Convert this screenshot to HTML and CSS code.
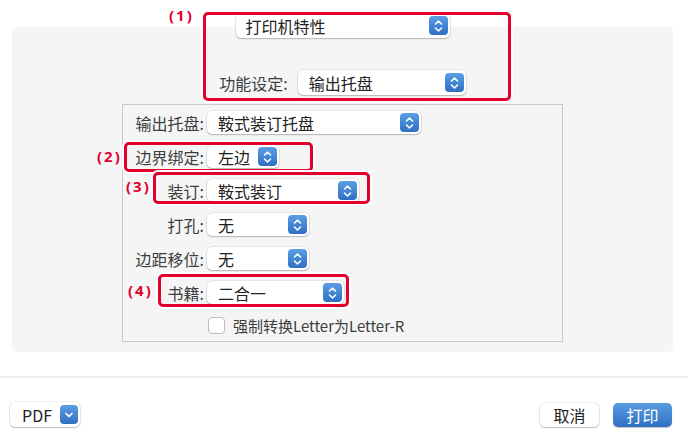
FILE: index.html
```html
<!DOCTYPE html>
<html lang="zh-CN">
<head>
    <meta charset="UTF-8">
    <meta name="viewport" content="width=device-width, initial-scale=1.0">
    <title>打印</title>
    <link rel="stylesheet" href="styles.css">
</head>
<body>
    <div class="window">
        <div class="panel">
            <div class="popup popup-top">
                <span>打印机特性</span>
                <span class="stepper"><svg viewBox="0 0 19 20" width="19" height="20"><path d="M6.5 8 L9.5 5 L12.5 8 M6.5 12 L9.5 15 L12.5 12" fill="none" stroke="#fff" stroke-width="1.6" stroke-linecap="round" stroke-linejoin="round"/></svg></span>
            </div>

            <div class="feature-row">
                <span class="label">功能设定:</span>
                <div class="popup popup-feature">
                    <span>输出托盘</span>
                    <span class="stepper"><svg viewBox="0 0 19 20" width="19" height="20"><path d="M6.5 8 L9.5 5 L12.5 8 M6.5 12 L9.5 15 L12.5 12" fill="none" stroke="#fff" stroke-width="1.6" stroke-linecap="round" stroke-linejoin="round"/></svg></span>
                </div>
            </div>

            <div class="options">
                <span class="label">输出托盘:</span>
                <div class="popup w-214">
                    <span>鞍式装订托盘</span>
                    <span class="stepper"><svg viewBox="0 0 19 20" width="19" height="20"><path d="M6.5 8 L9.5 5 L12.5 8 M6.5 12 L9.5 15 L12.5 12" fill="none" stroke="#fff" stroke-width="1.6" stroke-linecap="round" stroke-linejoin="round"/></svg></span>
                </div>

                <span class="label">边界绑定:</span>
                <div class="popup w-72">
                    <span>左边</span>
                    <span class="stepper"><svg viewBox="0 0 19 20" width="19" height="20"><path d="M6.5 8 L9.5 5 L12.5 8 M6.5 12 L9.5 15 L12.5 12" fill="none" stroke="#fff" stroke-width="1.6" stroke-linecap="round" stroke-linejoin="round"/></svg></span>
                </div>

                <span class="label">装订:</span>
                <div class="popup w-152">
                    <span>鞍式装订</span>
                    <span class="stepper"><svg viewBox="0 0 19 20" width="19" height="20"><path d="M6.5 8 L9.5 5 L12.5 8 M6.5 12 L9.5 15 L12.5 12" fill="none" stroke="#fff" stroke-width="1.6" stroke-linecap="round" stroke-linejoin="round"/></svg></span>
                </div>

                <span class="label">打孔:</span>
                <div class="popup w-102">
                    <span>无</span>
                    <span class="stepper"><svg viewBox="0 0 19 20" width="19" height="20"><path d="M6.5 8 L9.5 5 L12.5 8 M6.5 12 L9.5 15 L12.5 12" fill="none" stroke="#fff" stroke-width="1.6" stroke-linecap="round" stroke-linejoin="round"/></svg></span>
                </div>

                <span class="label">边距移位:</span>
                <div class="popup w-102">
                    <span>无</span>
                    <span class="stepper"><svg viewBox="0 0 19 20" width="19" height="20"><path d="M6.5 8 L9.5 5 L12.5 8 M6.5 12 L9.5 15 L12.5 12" fill="none" stroke="#fff" stroke-width="1.6" stroke-linecap="round" stroke-linejoin="round"/></svg></span>
                </div>

                <span class="label">书籍:</span>
                <div class="popup w-137">
                    <span>二合一</span>
                    <span class="stepper"><svg viewBox="0 0 19 20" width="19" height="20"><path d="M6.5 8 L9.5 5 L12.5 8 M6.5 12 L9.5 15 L12.5 12" fill="none" stroke="#fff" stroke-width="1.6" stroke-linecap="round" stroke-linejoin="round"/></svg></span>
                </div>

                <label class="check-row">
                    <span class="checkbox"></span>
                    <span>强制转换Letter为Letter-R</span>
                </label>
            </div>
        </div>

        <div class="divider"></div>

        <div class="footer">
            <button class="pdf-button">
                <span>PDF</span>
                <span class="pdf-arrow"><svg viewBox="0 0 18 18" width="18" height="18"><path d="M6 7.5 L9 10.5 L12 7.5" fill="none" stroke="#fff" stroke-width="1.7" stroke-linecap="round" stroke-linejoin="round"/></svg></span>
            </button>
            <div class="actions">
                <button class="btn">取消</button>
                <button class="btn btn-primary">打印</button>
            </div>
        </div>

        <!-- callout markers -->
        <div class="callout box-1"></div>
        <div class="callout box-2"></div>
        <div class="callout box-3"></div>
        <div class="callout box-4"></div>
        <span class="marker marker-1">(1)</span>
        <span class="marker marker-2">(2)</span>
        <span class="marker marker-3">(3)</span>
        <span class="marker marker-4">(4)</span>
    </div>
</body>
</html>
```

FILE: styles.css
```css
:root {
    --panel: #f5f5f5;
    --border: #c9c9c9;
    --text: #222222;
    --label: #3d3d3d;
    --blue-top: #5c9ee4;
    --blue-bottom: #2e6fc4;
    --red: #e2002c;
}
body {
    margin: 0;
    background: #ffffff;
    font-family: "Noto Sans CJK SC", "Noto Sans", sans-serif;
    font-size: 16px;
    color: var(--text);
}
.window {
    position: relative;
    width: 688px;
    height: 445px;
    overflow: hidden;
}
.panel {
    margin: 27px 15px 0 12px;
    height: 325px;
    background: var(--panel);
    border-radius: 5px;
    display: flex;
    flex-direction: column;
    align-items: center;
}

/* popup buttons */
.popup {
    box-sizing: border-box;
    height: 23px;
    padding: 0 2px 0 11px;
    background: #ffffff;
    border-radius: 5px;
    box-shadow: 0 0 0 0.5px rgba(0, 0, 0, 0.12), 0 1px 1.5px rgba(0, 0, 0, 0.22);
    display: flex;
    align-items: center;
    justify-content: space-between;
    line-height: 1;
    white-space: nowrap;
}
.stepper {
    width: 19px;
    height: 19px;
    border-radius: 4px;
    background: linear-gradient(var(--blue-top), var(--blue-bottom));
    display: flex;
    align-items: center;
    justify-content: center;
}
.stepper svg {
    display: block;
}
.popup-top {
    width: 214px;
    height: 25px;
    margin-top: -14px;
    padding-left: 10px;
}
.feature-row {
    margin-top: 32px;
    display: flex;
    align-items: center;
    gap: 10px;
}
.popup-feature {
    width: 168px;
    height: 25px;
}
.label {
    color: var(--label);
    line-height: 1;
    white-space: nowrap;
}

/* bordered option group */
.options {
    box-sizing: border-box;
    width: 441px;
    height: 238px;
    margin-top: 9px;
    padding-top: 6px;
    border: 1px solid var(--border);
    display: grid;
    grid-template-columns: 81px auto;
    column-gap: 3px;
    row-gap: 11px;
    align-content: start;
    align-items: center;
    justify-items: start;
}
.options .label {
    justify-self: end;
}
.w-214 { width: 214px; }
.w-152 { width: 152px; }
.w-137 { width: 137px; }
.w-102 { width: 102px; }
.w-72 { width: 72px; }

.check-row {
    grid-column: 2;
    margin: 2px 0 0 1px;
    display: flex;
    align-items: center;
    gap: 8px;
    font-size: 15px;
    color: var(--label);
    line-height: 1;
}
.checkbox {
    box-sizing: border-box;
    width: 17px;
    height: 17px;
    background: #ffffff;
    border: 1px solid #bdbdbd;
    border-radius: 4px;
}

.divider {
    height: 2px;
    margin-top: 24px;
    background: #ececec;
}
.footer {
    margin-top: 24px;
    padding: 0 16px 0 10px;
    display: flex;
    justify-content: space-between;
    align-items: center;
}
button {
    font-family: inherit;
    font-size: 16px;
    border: none;
    cursor: pointer;
}
.pdf-button {
    box-sizing: border-box;
    width: 70px;
    height: 25px;
    padding: 0 2px 0 12px;
    background: #ffffff;
    border-radius: 5px;
    box-shadow: 0 0 0 0.5px rgba(0, 0, 0, 0.12), 0 1px 1.5px rgba(0, 0, 0, 0.22);
    display: flex;
    align-items: center;
    justify-content: space-between;
    color: var(--text);
    line-height: 1;
}
.pdf-arrow {
    width: 18px;
    height: 19px;
    border-radius: 4px;
    background: linear-gradient(var(--blue-top), var(--blue-bottom));
    display: flex;
    align-items: center;
    justify-content: center;
}
.actions {
    display: flex;
    gap: 14px;
}
.btn {
    box-sizing: border-box;
    width: 59px;
    height: 24px;
    padding: 0;
    background: #ffffff;
    border-radius: 5px;
    box-shadow: 0 0 0 0.5px rgba(0, 0, 0, 0.12), 0 1px 1.5px rgba(0, 0, 0, 0.22);
    color: var(--text);
    line-height: 1;
}
.btn-primary {
    background: linear-gradient(#5a9ce2, #2f70c4);
    color: #ffffff;
    box-shadow: 0 0.5px 1px rgba(0, 0, 0, 0.25);
}

/* red callouts drawn over the dialog */
.callout {
    position: absolute;
    box-sizing: border-box;
    border: 3px solid var(--red);
    border-radius: 5px;
    box-shadow: 0 0 0 2px #ffffff;
}
.box-1 { left: 203px; top: 12px; width: 308px; height: 89px; }
.box-2 { left: 124px; top: 142px; width: 189px; height: 30px; }
.box-3 { left: 153px; top: 172px; width: 217px; height: 32px; }
.box-4 { left: 158px; top: 274px; width: 191px; height: 33px; }
.marker {
    position: absolute;
    color: var(--red);
    font-family: "Noto Sans", sans-serif;
    font-weight: 700;
    font-size: 15px;
    line-height: 1;
    letter-spacing: 2px;
}
.marker-1 { left: 169px; top: 8px; }
.marker-2 { left: 97px; top: 149px; }
.marker-3 { left: 126px; top: 179px; }
.marker-4 { left: 128px; top: 283px; }
```
